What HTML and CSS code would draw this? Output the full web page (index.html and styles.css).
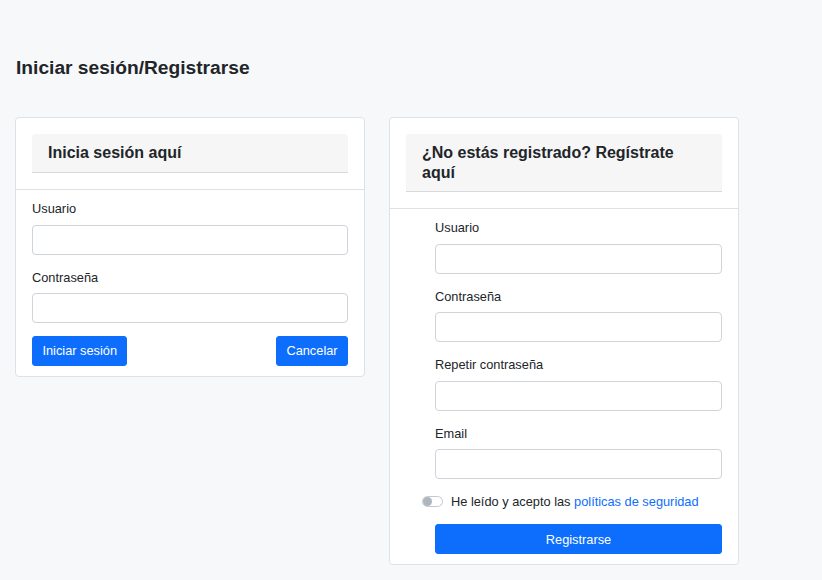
FILE: index.html
```html
<!DOCTYPE html>
<html lang="es">
<head>
<meta charset="utf-8">
<title>Iniciar sesión/Registrarse</title>
<link rel="stylesheet" href="styles.css">
</head>
<body>
<main class="page">
  <h1 class="page-title">Iniciar sesión/Registrarse</h1>
  <div class="cards">
    <section class="card">
      <div class="card-top">
        <h2 class="card-title">Inicia sesión aquí</h2>
      </div>
      <form class="card-body">
        <div class="field">
          <label class="label">Usuario</label>
          <input class="input" type="text">
        </div>
        <div class="field">
          <label class="label">Contraseña</label>
          <input class="input" type="password">
        </div>
        <div class="actions">
          <button type="button" class="btn">Iniciar sesión</button>
          <button type="button" class="btn">Cancelar</button>
        </div>
      </form>
    </section>

    <section class="card">
      <div class="card-top">
        <h2 class="card-title">¿No estás registrado? Regístrate aquí</h2>
      </div>
      <form class="card-body card-body-register">
        <div class="field">
          <label class="label">Usuario</label>
          <input class="input" type="text">
        </div>
        <div class="field">
          <label class="label">Contraseña</label>
          <input class="input" type="password">
        </div>
        <div class="field">
          <label class="label">Repetir contraseña</label>
          <input class="input" type="password">
        </div>
        <div class="field">
          <label class="label">Email</label>
          <input class="input" type="email">
        </div>
        <div class="check-row">
          <span class="switch"><span class="knob"></span></span>
          <span class="check-text">He leído y acepto las <a class="link" href="#">políticas de seguridad</a></span>
        </div>
        <button type="button" class="btn btn-block">Registrarse</button>
      </form>
    </section>
  </div>
</main>
</body>
</html>
```

FILE: styles.css
```css
* {
  box-sizing: border-box;
}

html, body {
  margin: 0;
  padding: 0;
}

body {
  background: #f7f8fa;
  color: #212529;
  font-family: "Liberation Sans", Arial, sans-serif;
  font-size: 12.8px;
  line-height: 19.2px;
  min-height: 580px;
}

.page {
  padding: 57px 15px 0 15px;
}

.page-title {
  margin: 0 0 0 1px;
  font-size: 19.2px;
  line-height: 22.8px;
  font-weight: 700;
  color: #212529;
}

.cards {
  display: flex;
  align-items: flex-start;
  gap: 24px;
  margin-top: 37.2px;
}

.card {
  width: 350px;
  background: #fff;
  border: 1px solid #dee2e6;
  border-radius: 4px;
}

.card-top {
  padding: 16px;
  border-bottom: 1px solid #dee2e6;
}

.card-title {
  margin: 0;
  padding: 9.5px 16px;
  background: #f6f6f6;
  border-bottom: 1px solid #d9d9d9;
  border-radius: 3px 3px 0 0;
  font-size: 16px;
  line-height: 19.2px;
  font-weight: 700;
  color: #212529;
}

.card-body {
  padding: 9px 16px 10px 16px;
  margin: 0;
}

.card-body-register {
  padding: 9px 16px 9.6px 45px;
}

.field {
  margin-bottom: 13px;
}

.label {
  display: block;
  margin-bottom: 6.4px;
  line-height: 19.2px;
}

.input {
  display: block;
  width: 100%;
  height: 29.8px;
  margin: 0;
  padding: 4px 8px;
  border: 1px solid #ced4da;
  border-radius: 4px;
  background: #fff;
  font: inherit;
}

.actions {
  display: flex;
  justify-content: space-between;
  align-items: center;
}

.btn {
  height: 30px;
  padding: 0 9.4px;
  border: 1px solid #0d6efd;
  border-radius: 3px;
  background: #0d6efd;
  color: #fff;
  font: inherit;
  line-height: 19.2px;
  cursor: pointer;
}

.btn-block {
  display: block;
  width: 100%;
}

.check-row {
  display: flex;
  align-items: center;
  gap: 8px;
  margin-left: -13px;
  margin-bottom: 13px;
  line-height: 19.2px;
}

.switch {
  display: inline-flex;
  align-items: center;
  width: 21px;
  height: 11px;
  padding: 0 1px;
  border: 1px solid #c3c8ce;
  border-radius: 6px;
  background: #fff;
}

.knob {
  width: 9px;
  height: 9px;
  margin-left: -1px;
  border-radius: 50%;
  background: #adb5bd;
}

.link {
  color: #0d6efd;
  text-decoration: none;
}
```
